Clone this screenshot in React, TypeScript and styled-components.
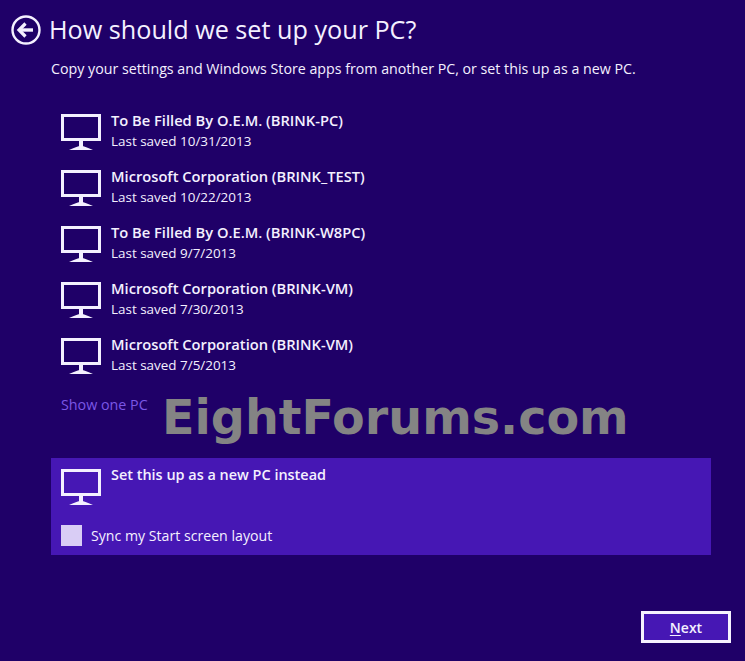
import React from 'react';
import styled, { createGlobalStyle } from 'styled-components';

const GlobalStyle = createGlobalStyle`
  html, body {
    margin: 0;
    padding: 0;
    background: #1f0068;
  }
`;

const Page = styled.div`
  position: relative;
  width: 745px;
  height: 661px;
  overflow: hidden;
  background: #1f0068;
  color: #f4f0ff;
  font-family: "Open Sans", "Noto Sans", sans-serif;
  box-sizing: border-box;
  padding: 14px 34px 0 11px;
  display: flex;
  flex-direction: column;
`;

const Header = styled.div`
  display: flex;
  align-items: center;
  gap: 8px;
  height: 32px;
`;

const BackButton = styled.svg`
  width: 30px;
  height: 30px;
  flex: none;
`;

const Title = styled.h1`
  margin: 0 0 2px;
  font-size: 25.2px;
  font-weight: 400;
  line-height: 30px;
`;

const Subtitle = styled.p`
  margin: 13px 0 0 40px;
  font-size: 14.22px;
  line-height: 20px;
  white-space: nowrap;
`;

const List = styled.div`
  display: flex;
  flex-direction: column;
  gap: 14px;
  margin: 31px 0 0 50px;
`;

const Row = styled.div`
  display: flex;
  gap: 10px;
  height: 42px;
`;

const PcGlyph = styled.svg`
  width: 40px;
  height: 36px;
  flex: none;
  margin-top: 4px;
`;

const RowText = styled.div`
  display: flex;
  flex-direction: column;
  gap: 1px;
`;

const RowTitle = styled.div`
  font-size: 14.7px;
  font-weight: 600;
  line-height: 20px;
  white-space: nowrap;
`;

const PanelTitle = styled(RowTitle)`
  font-size: 14.45px;
`;

const RowSub = styled.div`
  font-size: 13.45px;
  line-height: 20px;
`;

const ShowMore = styled.a`
  margin: 19px 0 0 50px;
  font-size: 14.3px;
  line-height: 20px;
  color: #7b57e6;
`;

const NewPcPanel = styled.div`
  margin: 43px 0 0 40px;
  height: 97px;
  background: #4617b4;
  box-sizing: border-box;
  padding: 7px 10px 0;
  display: flex;
  flex-direction: column;
`;

const SyncRow = styled.label`
  display: flex;
  align-items: center;
  gap: 9px;
  margin-top: 18px;
  font-size: 14.15px;
  line-height: 21px;
`;

const CheckBox = styled.span`
  display: block;
  width: 21px;
  height: 21px;
  background: #d9cdf5;
`;

const Footer = styled.div`
  display: flex;
  justify-content: flex-end;
  margin: 56px -20px 0 0;
`;

const NextButton = styled.button`
  width: 90px;
  height: 32px;
  box-sizing: border-box;
  border: 3px solid #f6f2ff;
  background: #4617b4;
  color: #f4f0ff;
  font-family: inherit;
  font-size: 14px;
  font-weight: 600;
  padding: 1px 0 0;

  u {
    text-underline-offset: 2px;
  }
`;

const Watermark = styled.div`
  position: absolute;
  left: 162px;
  top: 387px;
  font-family: "DejaVu Sans", sans-serif;
  font-size: 47.6px;
  font-weight: 700;
  line-height: 62px;
  color: #848484;
  white-space: nowrap;
`;

const PcIcon = () => (
  <PcGlyph viewBox="0 0 40 36" fill="none" aria-hidden="true">
    <rect x="1.5" y="1.5" width="37" height="24" stroke="#f4f0ff" strokeWidth="3" />
    <rect x="18" y="27" width="4" height="6" fill="#f4f0ff" />
    <path d="M8 36 C13 34 17 32 20 32 C23 32 27 34 32 36 Z" fill="#f4f0ff" />
  </PcGlyph>
);

const computers = [
  { name: 'To Be Filled By O.E.M. (BRINK-PC)', saved: '10/31/2013' },
  { name: 'Microsoft Corporation (BRINK_TEST)', saved: '10/22/2013' },
  { name: 'To Be Filled By O.E.M. (BRINK-W8PC)', saved: '9/7/2013' },
  { name: 'Microsoft Corporation (BRINK-VM)', saved: '7/30/2013' },
  { name: 'Microsoft Corporation (BRINK-VM)', saved: '7/5/2013' },
];

const App: React.FC = () => (
  <Page>
    <GlobalStyle />
    <Header>
      <BackButton viewBox="0 0 30 30" fill="none" aria-hidden="true">
        <circle cx="15" cy="15" r="13.5" stroke="#f4f0ff" strokeWidth="2.4" />
        <path d="M8 15 H22" stroke="#f4f0ff" strokeWidth="3.4" />
        <path d="M14.5 8.5 L8 15 L14.5 21.5" stroke="#f4f0ff" strokeWidth="3.2" />
      </BackButton>
      <Title>How should we set up your PC?</Title>
    </Header>
    <Subtitle>Copy your settings and Windows Store apps from another PC, or set this up as a new PC.</Subtitle>
    <List>
      {computers.map((pc) => (
        <Row key={pc.name + pc.saved}>
          <PcIcon />
          <RowText>
            <RowTitle>{pc.name}</RowTitle>
            <RowSub>Last saved {pc.saved}</RowSub>
          </RowText>
        </Row>
      ))}
    </List>
    <ShowMore>Show one PC</ShowMore>
    <NewPcPanel>
      <Row>
        <PcIcon />
        <PanelTitle>Set this up as a new PC instead</PanelTitle>
      </Row>
      <SyncRow>
        <CheckBox />
        Sync my Start screen layout
      </SyncRow>
    </NewPcPanel>
    <Footer>
      <NextButton>
        <u>N</u>ext
      </NextButton>
    </Footer>
    <Watermark>EightForums.com</Watermark>
  </Page>
);

export default App;
